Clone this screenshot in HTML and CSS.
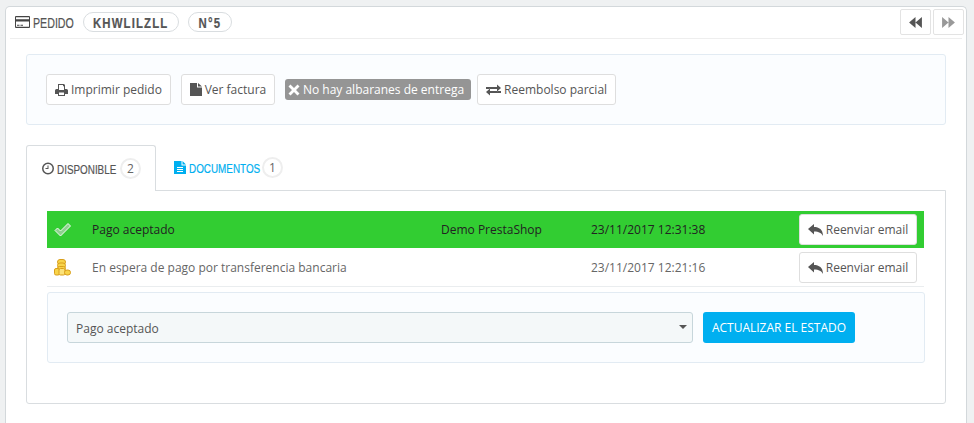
FILE: index.html
```html
<!DOCTYPE html>
<html lang="en">
<head>
  <meta charset="UTF-8">
  <meta name="viewport" content="width=device-width, initial-scale=1.0">
  <title>Pedido</title>
  <link rel="stylesheet" href="styles.css">
</head>
<body>
  <div class="panel">
    <div class="panel-heading">
      <svg class="icon card-icon" viewBox="0 0 15 12"><path fill="#444" fill-rule="evenodd" d="M1 0h13a1 1 0 0 1 1 1v10a1 1 0 0 1-1 1H1a1 1 0 0 1-1-1V1a1 1 0 0 1 1-1zm0 1.200v2h13v-2zM1 5.500v5.300h13V5.500zm1 3.300h2.500v1H2zm3.500 0H8v1H5.500z"/></svg>
      <span class="heading-title"><span class="narrow narrow-left">PEDIDO</span></span>
      <span class="pill pill-ref"><span class="narrow">KHWLILZLL</span></span>
      <span class="pill pill-num"><span class="narrow">N°5</span></span>
      <div class="pager">
        <a class="pager-btn"><svg class="icon" viewBox="0 0 14 12"><path fill="#555" d="M0 6l7-6v12zM7 6l7-6v12z"/></svg></a>
        <a class="pager-btn"><svg class="icon" viewBox="0 0 14 12"><path fill="#999" d="M14 6L7 0v12zM7 6L0 0v12z"/></svg></a>
      </div>
    </div>

    <div class="well actions">
      <a class="btn">
        <svg class="icon" viewBox="0 0 13 12"><path fill="#555" fill-rule="evenodd" d="M3 0h6l1 1v4h1.500A1.500 1.500 0 0 1 13 6.500V10h-3v2H3v-2H0V6.500A1.500 1.500 0 0 1 1.500 5H3zm1 1v5h5V2.200H8V1zm0 7.500V11h5V8.500z"/></svg>
        Imprimir pedido
      </a>
      <a class="btn btn-invoice">
        <svg class="icon" viewBox="0 0 12 13"><path fill="#555" d="M0 0h7v4.500h5V13H0zM8 0l4 3.500H8z"/></svg>
        Ver factura
      </a>
      <span class="badge">
        <svg class="icon" viewBox="0 0 12 12"><path fill="#fff" d="M2.500 0.500L6 4l3.500-3.500 2 2L8 6l3.500 3.500-2 2L6 8l-3.500 3.500-2-2L4 6 0.500 2.500z"/></svg>
        No hay albaranes de entrega
      </span>
      <a class="btn">
        <svg class="icon icon-wide" viewBox="0 0 15 12"><path fill="#555" d="M0 3h11V0.500L15 4l-4 3.500V5H0zM15 7H4V4.500L0 8l4 3.500V9h11z"/></svg>
        Reembolso parcial
      </a>
    </div>

    <ul class="tabs">
      <li class="tab tab-active">
        <svg class="icon" viewBox="0 0 12 12"><path fill="#555" fill-rule="evenodd" d="M6 0a6 6 0 1 1 0 12A6 6 0 0 1 6 0zm0 1.500a4.500 4.500 0 1 0 0 9 4.500 4.500 0 0 0 0-9zM5.500 3h1v3.500H3.500v-1h2z"/></svg>
        <span class="tab-label tab-label-first"><span class="narrow narrow-left">DISPONIBLE</span></span>
        <span class="count">2</span>
      </li>
      <li class="tab">
        <svg class="icon" viewBox="0 0 12 13"><path fill="#00aff0" fill-rule="evenodd" d="M0 0h7.500v4.500H12V13H0zM8.500 0L12 3.500H8.500zM3 6v1h6V6zm0 2v1h6V8zm0 2v1h6v-1z"/></svg>
        <span class="tab-label"><span class="narrow narrow-left">DOCUMENTOS</span></span>
        <span class="count">1</span>
      </li>
    </ul>

    <div class="tab-content">
      <div class="history-row row-current">
        <span class="row-icon">
          <svg class="icon" viewBox="0 0 17 14"><path fill="#8fd08f" stroke="#f2fbf2" stroke-width="1" d="M1 8l2.500-2.500L6.500 8.500 14 1l2.500 2.500-10 10z"/></svg>
        </span>
        <span class="row-status">Pago aceptado</span>
        <span class="row-user">Demo PrestaShop</span>
        <span class="row-date">23/11/2017 12:31:38</span>
        <a class="btn btn-resend">
          <svg class="icon" viewBox="0 0 15 12"><path fill="#555" d="M6 0v3c5 0 9 2.500 9 9-1.500-3-4-4.500-9-4.500v3L0 5z"/></svg>
          Reenviar email
        </a>
      </div>
      <div class="history-row">
        <span class="row-icon">
          <svg class="icon" viewBox="0 0 17 17">
            <rect x="3.500" y="0.500" width="8" height="5" rx="2.500" fill="#f8d44a" stroke="#d99f1c"/>
            <rect x="3.500" y="4" width="8" height="5" rx="2.500" fill="#f8d44a" stroke="#d99f1c"/>
            <rect x="3.500" y="7.500" width="8" height="4" rx="2" fill="#f8d44a" stroke="#d99f1c"/>
            <rect x="0.500" y="9.500" width="5" height="6.500" rx="1.500" fill="#f8d44a" stroke="#d99f1c"/>
            <rect x="5" y="9.500" width="6" height="6.500" rx="1.500" fill="#fbe27a" stroke="#d99f1c"/>
            <rect x="10.500" y="11" width="6" height="5" rx="2.500" fill="#f8d44a" stroke="#d99f1c"/>
          </svg>
        </span>
        <span class="row-status">En espera de pago por transferencia bancaria</span>
        <span class="row-user"></span>
        <span class="row-date">23/11/2017 12:21:16</span>
        <a class="btn btn-resend">
          <svg class="icon" viewBox="0 0 15 12"><path fill="#555" d="M6 0v3c5 0 9 2.500 9 9-1.500-3-4-4.500-9-4.500v3L0 5z"/></svg>
          Reenviar email
        </a>
      </div>

      <div class="well status-form">
        <div class="select-box">
          Pago aceptado
          <span class="caret"></span>
        </div>
        <button class="btn-primary" type="button">ACTUALIZAR EL ESTADO</button>
      </div>
    </div>
  </div>
</body>
</html>
```
FILE: styles.css
```css
body {
  font-family: "Open Sans", Arial, sans-serif;
  font-size: 12px;
  color: #555;
  background-color: #eff1f2;
  margin: 0;
  padding: 6px 7px 0 5px;
  box-sizing: border-box;
  height: 423px;
  overflow: hidden;
}

.icon {
  display: block;
  flex: none;
}

/* no condensed font here, so squeeze the regular one */
.narrow {
  display: inline-block;
  flex: none;
  font-family: "Liberation Sans", Arial, sans-serif;
  white-space: nowrap;
  -webkit-text-stroke: 0.2px currentColor;
  transform: scaleX(0.76);
}

.narrow-left {
  transform-origin: left center;
}

.panel {
  background: #fff;
  border: 1px solid #d3d8db;
  border-bottom: none;
  border-radius: 5px 5px 0 0;
  padding: 2px 20px 0;
  height: 417px;
  box-sizing: border-box;
}

.panel-heading {
  display: flex;
  align-items: center;
  height: 26px;
  margin: 0 -16px 15px;
  padding: 0 0 3px 5px;
  border-bottom: 1px solid #eee;
  font-size: 14px;
}

.card-icon {
  width: 15px;
  height: 12px;
  margin-right: 3px;
}

.heading-title {
  width: 41px;
  margin-right: 9px;
}

.pill {
  display: flex;
  align-items: center;
  justify-content: center;
  flex: none;
  height: 18px;
  border: 1px solid #d9dde0;
  border-radius: 10px;
  font-size: 15px;
  font-weight: bold;
  letter-spacing: 1.500px;
}

.pill-ref {
  width: 94px;
  margin-right: 9px;
}

.pill-num {
  width: 42px;
}

.pager {
  display: flex;
  align-self: flex-start;
  gap: 2px;
  margin: 0 -2px 0 auto;
}

.pager-btn {
  display: flex;
  align-items: center;
  justify-content: center;
  width: 29px;
  height: 24px;
  border: 1px solid #e3e3e3;
  border-radius: 2px;
}

.pager-btn .icon {
  width: 13px;
  height: 11px;
}

.well {
  background: #fbfdff;
  border: 1px solid #e2ebf3;
  border-radius: 3px;
  box-sizing: border-box;
}

.actions {
  display: flex;
  align-items: center;
  height: 71px;
  padding: 0 19px;
  gap: 10px;
}

.btn {
  display: flex;
  align-items: center;
  justify-content: center;
  gap: 3px;
  height: 31px;
  box-sizing: border-box;
  background: #fff;
  border: 1px solid #dedede;
  border-radius: 3px;
  padding: 0 8px;
  color: #555;
  white-space: nowrap;
}

.btn .icon {
  width: 13px;
  height: 12px;
}

.btn .icon-wide {
  width: 15px;
}

.btn-invoice {
  width: 94px;
  padding: 0;
}

.btn-invoice .icon {
  width: 12px;
  height: 13px;
}

.badge {
  display: flex;
  align-items: center;
  gap: 3px;
  height: 21px;
  background: #959595;
  border-radius: 3px;
  padding: 0 7px 0 3px;
  margin-right: -4px;
  color: #fff;
  white-space: nowrap;
}

.badge .icon {
  width: 12px;
  height: 12px;
}

.tabs {
  list-style: none;
  display: flex;
  height: 45px;
  margin: 20px 0 0;
  padding: 0;
}

.tab {
  display: flex;
  align-items: center;
  gap: 2px;
  padding: 0 16px 0 18px;
  font-size: 13px;
  color: #00aff0;
}

.tab .icon {
  width: 12px;
  height: 13px;
}

.tab-label {
  width: 71px;
  margin-left: 1px;
}

.tab-label-first {
  width: 61px;
}

.tab-active {
  color: #555;
  width: 130px;
  box-sizing: border-box;
  height: 46px;
  padding-left: 15px;
  background: #fff;
  border: 1px solid #d9dde0;
  border-bottom: none;
  border-radius: 3px 3px 0 0;
  position: relative;
  z-index: 1;
}

.count {
  display: flex;
  align-items: center;
  justify-content: center;
  flex: none;
  width: 17px;
  height: 17px;
  border: 2px solid #eee;
  border-radius: 50%;
  background: #fff;
  color: #666;
  font-size: 12px;
}

.tab-content {
  height: 214px;
  box-sizing: border-box;
  border: 1px solid #d9dde0;
  border-radius: 0 0 3px 3px;
  padding: 20px;
}

.history-row {
  display: flex;
  align-items: center;
  height: 38px;
  box-sizing: border-box;
  margin-right: 1px;
  border-bottom: 1px solid #eaedef;
  color: #666;
}

.row-current {
  height: 37px;
  margin-bottom: 1px;
  border-bottom: none;
  background: #32cd32;
  color: #222;
}

.row-icon {
  display: flex;
  justify-content: center;
  width: 45px;
  padding-right: 15px;
  box-sizing: border-box;
}

.row-icon .icon {
  width: 17px;
  height: 17px;
}

.row-status {
  width: 349px;
}

.row-user {
  width: 150px;
}

.row-date {
  width: 208px;
}

.btn-resend {
  width: 118px;
}

.btn-resend .icon {
  width: 15px;
  height: 12px;
}

.status-form {
  display: flex;
  align-items: center;
  gap: 10px;
  height: 71px;
  margin-top: 5px;
  padding: 0 19px;
}

.select-box {
  position: relative;
  display: flex;
  align-items: center;
  width: 626px;
  height: 31px;
  box-sizing: border-box;
  padding: 1px 0 0 8px;
  background: #f4f8f9;
  border: 1px solid #c7d6db;
  border-radius: 3px;
}

.caret {
  position: absolute;
  right: 5px;
  top: 12px;
  border-left: 4px solid transparent;
  border-right: 4px solid transparent;
  border-top: 4px solid #555;
}

.btn-primary {
  width: 152px;
  height: 31px;
  padding: 0;
  background: #00aff0;
  border: none;
  border-radius: 3px;
  color: #fff;
  font-family: "Open Sans", Arial, sans-serif;
  font-size: 12px;
}
```
